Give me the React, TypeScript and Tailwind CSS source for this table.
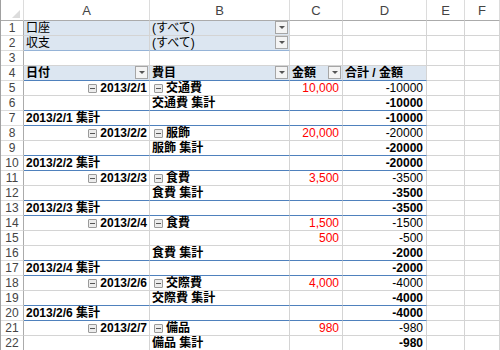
import type { ReactNode } from "react";

const FONT = { fontFamily: '"Liberation Sans", "Noto Sans CJK JP", sans-serif' };

type Row =
  | { t: "detail"; date?: string; item?: string; amt: string; val: string }
  | { t: "itemTotal"; label: string; val: string }
  | { t: "dateTotal"; label: string; val: string };

const rows: Row[] = [
  { t: "detail", date: "2013/2/1", item: "交通費", amt: "10,000", val: "-10000" },
  { t: "itemTotal", label: "交通費 集計", val: "-10000" },
  { t: "dateTotal", label: "2013/2/1 集計", val: "-10000" },
  { t: "detail", date: "2013/2/2", item: "服飾", amt: "20,000", val: "-20000" },
  { t: "itemTotal", label: "服飾 集計", val: "-20000" },
  { t: "dateTotal", label: "2013/2/2 集計", val: "-20000" },
  { t: "detail", date: "2013/2/3", item: "食費", amt: "3,500", val: "-3500" },
  { t: "itemTotal", label: "食費 集計", val: "-3500" },
  { t: "dateTotal", label: "2013/2/3 集計", val: "-3500" },
  { t: "detail", date: "2013/2/4", item: "食費", amt: "1,500", val: "-1500" },
  { t: "detail", amt: "500", val: "-500" },
  { t: "itemTotal", label: "食費 集計", val: "-2000" },
  { t: "dateTotal", label: "2013/2/4 集計", val: "-2000" },
  { t: "detail", date: "2013/2/6", item: "交際費", amt: "4,000", val: "-4000" },
  { t: "itemTotal", label: "交際費 集計", val: "-4000" },
  { t: "dateTotal", label: "2013/2/6 集計", val: "-4000" },
  { t: "detail", date: "2013/2/7", item: "備品", amt: "980", val: "-980" },
  { t: "itemTotal", label: "備品 集計", val: "-980" },
];

function Cell({
  children,
  blue,
  fill,
  right,
  red,
  lineClass,
  className = "",
}: {
  children?: ReactNode;
  blue?: boolean;
  fill?: boolean;
  right?: boolean;
  red?: boolean;
  lineClass?: string;
  className?: string;
}) {
  return (
    <div
      className={[
        "flex h-[15px] items-end whitespace-nowrap border-r border-b border-r-[#d4d4d4] text-[12px] leading-[14px]",
        red ? "text-[#ff0000]" : "text-black",
        lineClass ?? (blue ? "border-b-[#4f81bd]" : "border-b-[#d4d4d4]"),
        fill ? "bg-[#dce6f1]" : "bg-white",
        right ? "justify-end pr-[2px]" : "pl-[2px]",
        className,
      ].join(" ")}
    >
      {children}
    </div>
  );
}

function Dropdown() {
  return (
    <span className="mb-[1px] ml-auto mr-[1px] flex h-[13px] w-[13px] shrink-0 items-center justify-center border border-[#a6a6a6] bg-[#f4f4f4]">
      <span className="h-0 w-0 border-x-[3px] border-t-[3px] border-x-transparent border-t-[#555]" />
    </span>
  );
}

function Collapse() {
  return (
    <span className="mb-[2px] mr-[3px] flex h-[9px] w-[9px] shrink-0 items-center justify-center rounded-[1px] border border-[#9a9a9a] bg-[#ececec]">
      <span className="h-[1px] w-[5px] bg-[#555]" />
    </span>
  );
}

function RowHead({ n }: { n: number }) {
  return (
    <div className="flex h-[15px] items-end justify-center border-r border-b border-r-[#ababab] border-b-[#dcdcdc] bg-white text-[12px] leading-[14px] text-[#444]">
      {n}
    </div>
  );
}

function Blank() {
  return <div className="h-[15px] border-r border-b border-[#d4d4d4] bg-white" />;
}

export default function App() {
  const cols = ["A", "B", "C", "D", "E", "F"];
  return (
    <div className="h-[350px] w-[500px] overflow-hidden bg-white" style={FONT}>
      <div className="grid grid-cols-[23px_126px_140px_53px_84px_38px_1fr] border-l border-l-[#a0a0a0]">
        {/* column header */}
        <div className="relative h-[21px] border-r border-b border-r-[#dcdcdc] border-b-[#ababab] bg-white">
          <svg className="absolute bottom-[2px] right-[3px]" width="8" height="8" viewBox="0 0 8 8">
            <path d="M8 0 L8 8 L0 8 Z" fill="#dcdcdc" />
          </svg>
        </div>
        {cols.map((c) => (
          <div
            key={c}
            className="flex h-[21px] items-center justify-center border-r border-b border-r-[#dcdcdc] border-b-[#ababab] bg-white pt-[1px] text-[13px] text-[#444]"
          >
            {c}
          </div>
        ))}

        {/* filter area */}
        <RowHead n={1} />
        <Cell fill>口座</Cell>
        <Cell fill className="pl-[1px]">
          (すべて)
          <Dropdown />
        </Cell>
        <Blank />
        <Blank />
        <Blank />
        <Blank />

        <RowHead n={2} />
        <Cell fill lineClass="border-b-[#95b3d7]">収支</Cell>
        <Cell fill lineClass="border-b-[#95b3d7]" className="pl-[1px]">
          (すべて)
          <Dropdown />
        </Cell>
        <Blank />
        <Blank />
        <Blank />
        <Blank />

        <RowHead n={3} />
        <Blank />
        <Blank />
        <Blank />
        <Blank />
        <Blank />
        <Blank />

        {/* pivot header */}
        <RowHead n={4} />
        <Cell fill blue className="font-bold">
          日付
          <Dropdown />
        </Cell>
        <Cell fill blue className="font-bold">
          費目
          <Dropdown />
        </Cell>
        <Cell fill blue className="font-bold">
          金額
          <Dropdown />
        </Cell>
        <Cell fill blue className="font-bold">
          合計 / 金額
        </Cell>
        <Blank />
        <Blank />

        {rows.map((r, i) => {
          const n = i + 5;
          if (r.t === "detail") {
            return [
              <RowHead key={`h${n}`} n={n} />,
              <Cell key={`a${n}`} right className="font-bold">
                {r.date && (
                  <>
                    <Collapse />
                    {r.date}
                  </>
                )}
              </Cell>,
              <Cell key={`b${n}`} className="pl-[4px] font-bold">
                {r.item && (
                  <>
                    <Collapse />
                    {r.item}
                  </>
                )}
              </Cell>,
              <Cell key={`c${n}`} right red className="pr-[3px]">
                {r.amt}
              </Cell>,
              <Cell key={`d${n}`} right className="pr-[3px]">
                {r.val}
              </Cell>,
              <Blank key={`e${n}`} />,
              <Blank key={`f${n}`} />,
            ];
          }
          const item = r.t === "itemTotal";
          return [
            <RowHead key={`h${n}`} n={n} />,
            <Cell key={`a${n}`} blue className="font-bold">
              {item ? null : r.label}
            </Cell>,
            <Cell key={`b${n}`} blue className="font-bold">
              {item ? r.label : null}
            </Cell>,
            <Cell key={`c${n}`} blue />,
            <Cell key={`d${n}`} blue right className="pr-[3px] font-bold">
              {r.val}
            </Cell>,
            <Blank key={`e${n}`} />,
            <Blank key={`f${n}`} />,
          ];
        })}
      </div>
    </div>
  );
}
